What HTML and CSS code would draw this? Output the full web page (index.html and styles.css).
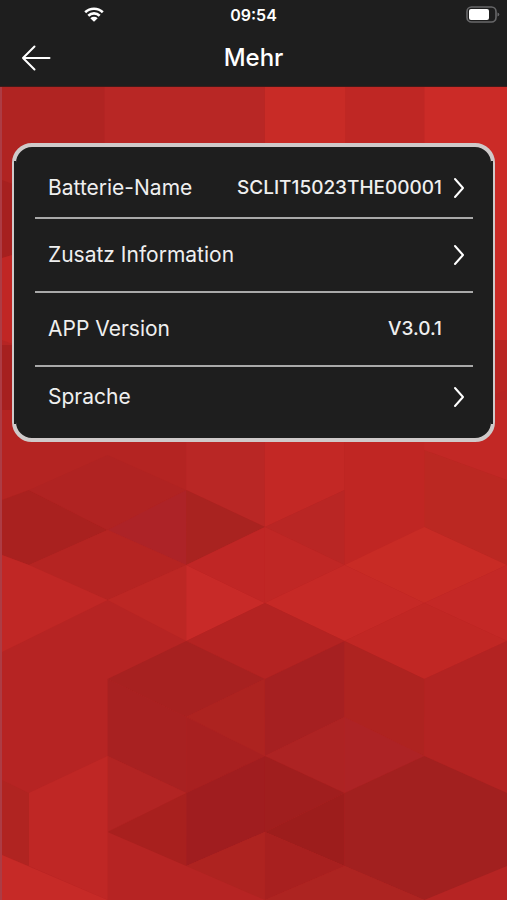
FILE: index.html
```html
<!DOCTYPE html>
<html lang="de">

<head>
    <meta charset="UTF-8">
    <meta name="viewport" content="width=device-width, initial-scale=1.0">
    <title>Mehr</title>
    <link rel="stylesheet" href="styles.css">
</head>

<body>
    <svg class="fondo" viewBox="0 87 507 813" preserveAspectRatio="none" aria-hidden="true">
        <rect y="87" width="507" height="813" fill="#b62423"/>
        <!-- top columns -->
        <path fill="#b02422" d="M0 87H103V340H0z"/>
        <path fill="#a6201f" d="M0 180L27 190V250L0 258z"/>
        <path fill="#c02624" d="M0 258L27 250V350L0 340z"/>
        <path fill="#a6201f" d="M0 345H27V410H0z"/>
        <path fill="#b82725" d="M103 87H264V200H103z"/>
        <path fill="#c82b26" d="M264 87H345V200H264z"/>
        <path fill="#bf2724" d="M345 87H424V200H345z"/>
        <path fill="#cb2b27" d="M424 87H507V340H424z"/>
        <path fill="#b92522" d="M480 340H507V390L480 400z"/>
        <!-- below the card -->
        <path fill="#b42422" d="M0 410H185V490L106 530L27 490L0 500z"/>
        <path fill="#a9211f" d="M0 500L27 490L106 530L27 565L0 555z"/>
        <path fill="#b02322" d="M27 490L106 455L185 490L106 530z"/>
        <path fill="#b92725" d="M185 410H264V527L185 490z"/>
        <path fill="#ad2327" d="M106 530L185 490V565z"/>
        <path fill="#a92320" d="M185 490L264 527L185 565z"/>
        <path fill="#b52422" d="M106 530L185 565L106 600L27 565z"/>
        <path fill="#c02725" d="M0 555L27 565L106 600L0 652z"/>
        <path fill="#bd2724" d="M106 600L185 565V641z"/>
        <path fill="#c82a28" d="M185 565L264 603L185 641z"/>
        <path fill="#c02625" d="M185 565L264 527V603z"/>
        <path fill="#c32825" d="M264 410H344V490L264 527z"/>
        <path fill="#b92624" d="M264 527L344 490V565z"/>
        <path fill="#c02725" d="M264 527L344 565L264 603z"/>
        <path fill="#c02623" d="M344 410H430V527L344 565z"/>
        <path fill="#bb2822" d="M424 450L507 480V565L424 527z"/>
        <path fill="#c22825" d="M424 400H507V480L424 450z"/>
        <path fill="#c82b25" d="M344 565L424 527L507 565L424 603z"/>
        <path fill="#c62926" d="M264 603L344 565L424 603L344 641z"/>
        <path fill="#c42826" d="M424 603L507 565V641z"/>
        <path fill="#c12724" d="M344 641L424 603L507 641L424 679z"/>
        <path fill="#b42322" d="M264 603L344 641L264 679L185 641z"/>
        <!-- lower cubes -->
        <path fill="#a72120" d="M185 641L264 679L185 717L106 679z"/>
        <path fill="#a82121" d="M106 679L185 717V793L106 756z"/>
        <path fill="#ad2320" d="M185 717L264 679V756z"/>
        <path fill="#a82020" d="M185 717L264 756L185 793z"/>
        <path fill="#b22423" d="M106 756L185 793L106 832z"/>
        <path fill="#a8201e" d="M106 832L185 793V866z"/>
        <path fill="#a62021" d="M264 679L344 641V717L264 756z"/>
        <path fill="#ae2320" d="M344 641L424 679V756L344 717z"/>
        <path fill="#ad2323" d="M264 756L344 717V793z"/>
        <path fill="#ad2325" d="M344 717L424 756L344 793z"/>
        <path fill="#b32322" d="M424 679L507 641V793L424 756z"/>
        <path fill="#a01d1f" d="M185 793L264 756V832L185 866z"/>
        <path fill="#a01e1e" d="M264 756L344 793L264 832z"/>
        <path fill="#9d1d1c" d="M264 832L344 793V866z"/>
        <path fill="#a2201f" d="M344 793L424 756L507 793V866L424 900L344 866z"/>
        <path fill="#a8201f" d="M264 832L344 866L264 900z"/>
        <path fill="#ae2320" d="M185 866L264 832V900z"/>
        <path fill="#ad2421" d="M264 900L344 866L424 900z"/>
        <path fill="#bf2725" d="M27 793L106 756V900L27 866z"/>
        <path fill="#b02421" d="M0 780L27 793V866L0 855z"/>
        <path fill="#c62a27" d="M0 855L106 900H0z"/>
    </svg>

    <header class="cabecera">
        <div class="estado">
            <svg class="wifi" viewBox="0 0 20 15" aria-label="WLAN">
                <path d="M1.2 5.3a12.6 12.6 0 0 1 17.6 0M4.3 8.7a8.2 8.2 0 0 1 11.4 0" fill="none" stroke="#fff" stroke-width="2.6"/>
                <path d="M6.3 11.2a5.4 5.4 0 0 1 7.4 0L10 14.8z" fill="#fff"/>
            </svg>
            <time class="hora">09:54</time>
            <svg class="bateria" viewBox="0 0 34 17" aria-label="Batterie">
                <rect x="1" y="1" width="29" height="15" rx="4.5" fill="none" stroke="#68686a" stroke-width="1.6"/>
                <rect x="3" y="3" width="20" height="11" rx="2" fill="#fff"/>
                <path d="M31.5 6.5q1.8 .6 1.8 2t-1.8 2z" fill="#68686a"/>
            </svg>
        </div>
        <div class="barra">
            <button class="volver" type="button" aria-label="Zurück">
                <svg viewBox="0 0 30 26"><path d="M28.500 13H2M13.500 1.500L2 13l11.500 11.500"/></svg>
            </button>
            <h1 class="titulo">Mehr</h1>
        </div>
    </header>

    <main class="contenido">
        <ul class="lista">
            <li>
                <button class="fila" type="button">
                    <span class="nombre">Batterie-Name</span>
                    <span class="valor">SCLIT15023THE00001</span>
                    <svg class="flecha" viewBox="0 0 12 22"><path d="M2 2L10 11l-8 9"/></svg>
                </button>
            </li>
            <li>
                <button class="fila alta" type="button">
                    <span class="nombre">Zusatz Information</span>
                    <svg class="flecha" viewBox="0 0 12 22"><path d="M2 2L10 11l-8 9"/></svg>
                </button>
            </li>
            <li>
                <div class="fila alta">
                    <span class="nombre">APP Version</span>
                    <span class="valor version">V3.0.1</span>
                </div>
            </li>
            <li>
                <button class="fila" type="button">
                    <span class="nombre">Sprache</span>
                    <svg class="flecha" viewBox="0 0 12 22"><path d="M2 2L10 11l-8 9"/></svg>
                </button>
            </li>
        </ul>
    </main>
</body>

</html>
```
FILE: styles.css
```css
* {
    box-sizing: border-box;
}

body {
    margin: 0;
    min-height: 100vh;
    background: #b62423;
    color: #efefef;
    font-family: Inter, "Liberation Sans", sans-serif;
}

/* low poly background, stays behind everything */
.fondo {
    position: absolute;
    z-index: -1;
    top: 87px;
    left: 0;
    width: 100%;
    height: calc(100vh - 87px);
    border-left: 2px solid #ad3c44;
}

.cabecera {
    height: 87px;
    background: #1e1e1e;
    border-bottom: 1px solid #401b1a;
}

.estado {
    display: grid;
    grid-template-columns: 1fr auto 1fr;
    align-items: center;
    height: 29px;
    padding: 0 7px;
}

.estado,
.barra {
    color: #fff;
}

.wifi {
    width: 20px;
    height: 15px;
    margin-left: 77px;
}

.hora {
    font-size: 16px;
    font-weight: 600;
    line-height: 20px;
}

.bateria {
    justify-self: end;
    width: 34px;
    height: 17px;
}

.barra {
    display: grid;
    grid-template-columns: 56px 1fr 56px;
    align-items: center;
    height: 58px;
}

.volver {
    display: flex;
    padding: 0 0 0 21px;
    border: none;
    background: none;
}

.volver svg {
    width: 30px;
    height: 26px;
}

.volver path,
.flecha path {
    fill: none;
    stroke: #fff;
    stroke-width: 2;
    stroke-linecap: round;
    stroke-linejoin: round;
}

.titulo {
    margin: 0;
    font-size: 24px;
    font-weight: 500;
    line-height: 30px;
    text-align: center;
}

.contenido {
    padding: 56px 12px;
}

.lista {
    position: relative;
    margin: 0;
    padding: 11px 18px 12px 19px;
    list-style: none;
    background: #1e1e1e;
    border: 4px solid #cfcaca;
    border-radius: 20px;
}

/* thinner sides between the corners */
.lista::before,
.lista::after {
    content: "";
    position: absolute;
    top: 14px;
    bottom: 14px;
    width: 2px;
    background: #1e1e1e;
}

.lista::before {
    left: -2px;
}

.lista::after {
    right: -2px;
}

.lista li + li {
    border-top: 2px solid #a9a9a9;
}

.fila {
    display: flex;
    align-items: center;
    width: 100%;
    height: 59px;
    padding: 0 8px 0 13px;
    border: none;
    background: none;
    color: inherit;
    font: inherit;
    text-align: left;
}

.fila.alta {
    height: 72px;
}

.nombre {
    flex: 1;
    font-size: 21px;
    line-height: 26px;
}

.valor {
    font-size: 19px;
    font-weight: 500;
    line-height: 24px;
}

.version {
    margin-right: 23px;
}

.flecha {
    width: 12px;
    height: 22px;
    margin-left: 11px;
}
```
